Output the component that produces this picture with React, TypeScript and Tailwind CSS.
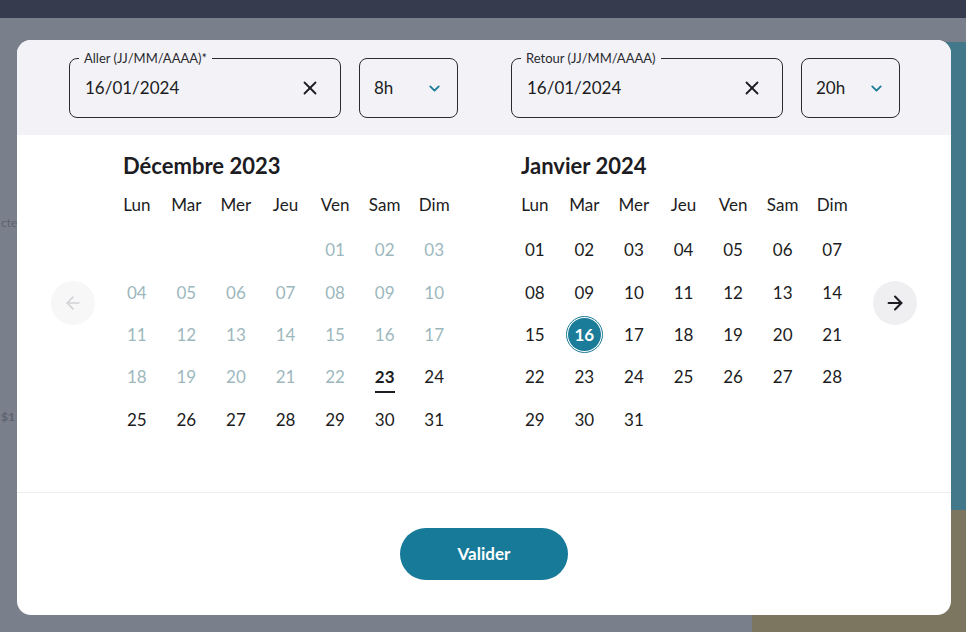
import { X, ChevronDown, ArrowLeft, ArrowRight } from "lucide-react";

const days = ["Lun", "Mar", "Mer", "Jeu", "Ven", "Sam", "Dim"];

type Cell = { d: string; muted?: boolean; today?: boolean; selected?: boolean } | null;

const pad = (n: number) => (n < 10 ? "0" + n : String(n));

const december: Cell[] = [
  null, null, null, null,
  ...Array.from({ length: 31 }, (_, i) => ({
    d: pad(i + 1),
    muted: i + 1 < 23,
    today: i + 1 === 23,
  })),
];

const january: Cell[] = Array.from({ length: 31 }, (_, i) => ({
  d: pad(i + 1),
  selected: i + 1 === 16,
}));

function Month({ title, cells }: { title: string; cells: Cell[] }) {
  return (
    <div className="w-[347px]">
      <h2 className="pl-[11px] text-[22px] font-bold leading-7 text-[#1c1c22]">{title}</h2>
      <div className="mt-[13px] grid grid-cols-7">
        {days.map((d) => (
          <div key={d} className="h-6 text-center text-[17px] leading-6 text-[#1c1c22]">
            {d}
          </div>
        ))}
      </div>
      <div className="mt-3 grid grid-cols-7">
        {cells.map((c, i) => (
          <div key={i} className="flex h-[42.3px] items-center justify-center">
            {c && (c.selected ? (
              <span className="flex h-[37px] w-[37px] items-center justify-center rounded-full border border-[#1a7c98] bg-white">
                <span className="flex h-[33px] w-[33px] items-center justify-center rounded-full bg-[#1a7c98] text-[17px] font-bold text-white">{c.d}</span>
              </span>
            ) : c.today ? (
              <span className="relative text-[17px] font-bold text-[#1c1c22]">
                {c.d}
                <span className="absolute -bottom-[3px] left-0 right-0 h-[2px] bg-[#1c1c22]" />
              </span>
            ) : (
              <span className={`text-[17px] ${c.muted ? "text-[#9db8bd]" : "text-[#1c1c22]"}`}>{c.d}</span>
            ))}
          </div>
        ))}
      </div>
    </div>
  );
}

function DateField({ label, value }: { label: string; value: string }) {
  return (
    <div className="relative flex h-[60px] w-[272px] items-center justify-between rounded-lg border border-[#2a2a30] pl-[15px] pr-[19px]">
      <span className="absolute -top-[9px] left-[9px] bg-[#f3f3f7] px-[5px] text-[13px] leading-4 text-[#2a2a30]">
        {label}
      </span>
      <span className="text-[17px] text-[#1c1c22]">{value}</span>
      <X size={22} strokeWidth={2} className="text-[#1c1c22]" />
    </div>
  );
}

function TimeField({ value }: { value: string }) {
  return (
    <div className="flex h-[60px] w-[99px] items-center justify-between rounded-lg border border-[#2a2a30] pl-[14px] pr-[14px]">
      <span className="text-[17px] text-[#1c1c22]">{value}</span>
      <ChevronDown size={17} strokeWidth={2.6} className="text-[#1a7c98]" />
    </div>
  );
}

export default function App() {
  return (
    <div className="relative h-[632px] w-[966px] overflow-hidden bg-[#7a7f8c]" style={{ fontFamily: "Lato, 'Noto Sans', sans-serif" }}>
      {/* page behind the dialog */}
      <div className="h-[18px] bg-[#363c4d]" />
      <div className="flex h-[614px]">
        <div className="flex-1 pl-[1px] pt-[196px]">
          <p className="text-[12px] text-[#5e636f]">cte</p>
          <p className="mt-[176px] text-[12px] font-bold text-[#5e636f]">$1</p>
        </div>
        <div className="flex w-[214px] flex-col bg-[#43788b]">
          <div className="h-[24px] bg-[#7a7f8c]" />
          <div className="mt-auto h-[122px] bg-[#7c7660] pl-[30px] pt-[88px] text-[13px] font-bold text-[#4d4a3c]">cadeaux !</div>
        </div>
      </div>

      {/* dialog */}
      <div className="absolute left-[17px] top-[40px] flex h-[575px] w-[934px] flex-col overflow-hidden rounded-[14px] bg-white">
        <div className="flex h-[95px] items-start bg-[#f3f3f7] pl-[52px] pt-[18px]">
          <DateField label="Aller (JJ/MM/AAAA)*" value="16/01/2024" />
          <div className="ml-[18px]">
            <TimeField value="8h" />
          </div>
          <div className="ml-[53px]">
            <DateField label="Retour (JJ/MM/AAAA)" value="16/01/2024" />
          </div>
          <div className="ml-[18px]">
            <TimeField value="20h" />
          </div>
        </div>

        <div className="flex h-[358px] items-start border-b border-[#eeeef2] pl-[34px] pt-[17px]">
          <button className="mt-[129px] flex h-[44px] w-[44px] items-center justify-center rounded-full bg-[#f7f7f8]">
            <ArrowLeft size={20} strokeWidth={2} className="text-[#d2d2d6]" />
          </button>
          <div className="ml-[17px]">
            <Month title="Décembre 2023" cells={december} />
          </div>
          <div className="ml-[51px]">
            <Month title="Janvier 2024" cells={january} />
          </div>
          <button className="ml-[16px] mt-[129px] flex h-[44px] w-[44px] items-center justify-center rounded-full bg-[#efeff1]">
            <ArrowRight size={22} strokeWidth={2.2} className="text-[#1c1c22]" />
          </button>
        </div>

        <div className="flex flex-1 justify-center pt-[35px]">
          <button className="h-[52px] w-[168px] rounded-full bg-[#167a98] text-[17px] font-bold text-white">
            Valider
          </button>
        </div>
      </div>
    </div>
  );
}
